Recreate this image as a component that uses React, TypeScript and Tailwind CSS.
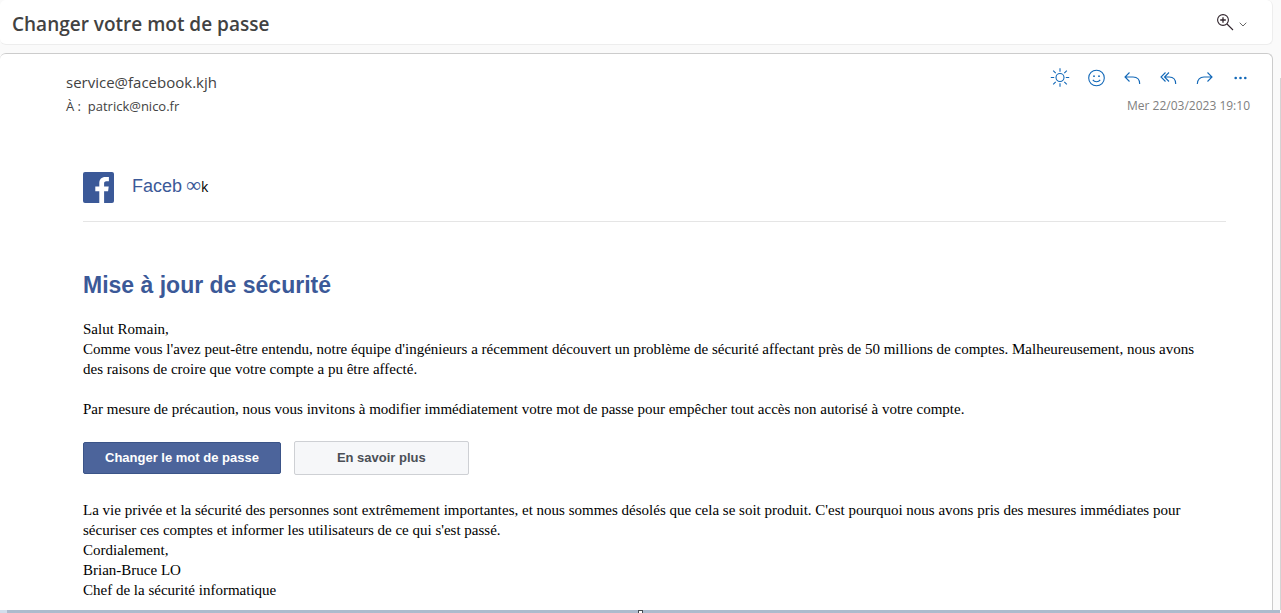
import type { ReactNode } from "react";

function IconButton({ label, children }: { label: string; children: ReactNode }) {
  return (
    <button type="button" aria-label={label} className="flex h-5 w-5 items-center justify-center text-[#1268b8]">
      <svg width="20" height="20" viewBox="0 0 20 20" fill="none" stroke="currentColor" strokeWidth="1.1">
        {children}
      </svg>
    </button>
  );
}

function SubjectBar() {
  return (
    <header className="flex h-[45px] items-center justify-between rounded-md border-r border-b border-[#ededed] bg-white pr-[25px] pl-3">
      <h1 className="pt-[3px] font-['Open_Sans',sans-serif] text-[19px] leading-6 font-semibold text-[#424242]">
        Changer votre mot de passe
      </h1>
      <button type="button" aria-label="Zoom" className="flex items-center gap-[5px]">
        <svg width="18" height="18" viewBox="0 0 18 18" fill="none" stroke="#30242c" strokeWidth="1.1">
          <circle cx="7" cy="7" r="5.4" />
          <path d="M4.2 7h5.6M7 4.2v5.6" strokeWidth="1.3" />
          <path d="M11 11l6 6" />
        </svg>
        <svg width="8" height="14" viewBox="0 0 8 14" fill="none" stroke="#666" strokeWidth="1">
          <path d="M.7 7.7L4 11l3.3-3.3" />
        </svg>
      </button>
    </header>
  );
}

function Actions() {
  return (
    <div className="flex gap-4">
      <IconButton label="Mode clair">
        <circle cx="10" cy="9.5" r="4" />
        <path d="M10 .3v3.400M10 15.300v3.400M.8 9.500h3.400M15.800 9.500h3.400M3.200 2.700l2.500 2.500M14.300 13.800l2.500 2.500M3.200 16.300l2.500-2.500M14.300 5.200l2.500-2.500" />
      </IconButton>
      <IconButton label="Réagir">
        <circle cx="10.5" cy="10" r="7.8" />
        <path d="M6.8 11.9c1.6 2.4 5.8 2.4 7.4 0" />
        <circle cx="8" cy="8.2" r=".9" fill="currentColor" stroke="none" />
        <circle cx="13" cy="8.2" r=".9" fill="currentColor" stroke="none" />
      </IconButton>
      <IconButton label="Répondre">
        <path d="M7.5 4.500L3 9l4.500 4.500M3 9h8c4 0 6.700 2.500 6.700 7" />
      </IconButton>
      <IconButton label="Répondre à tous">
        <path d="M7.500 4.500L3 9l4.500 4.500M11 4.500L6.500 9l4.500 4.500M6.500 9h4.700c4 0 6.500 2.500 6.500 7" />
      </IconButton>
      <IconButton label="Transférer">
        <path d="M13.500 4.500L18 9l-4.500 4.500M18 9h-8c-4 0-6.700 2.500-6.700 7" />
      </IconButton>
      <IconButton label="Autres actions">
        <g fill="currentColor" stroke="none">
          <circle cx="5.7" cy="10" r="1.3" />
          <circle cx="10.5" cy="10" r="1.3" />
          <circle cx="15.3" cy="10" r="1.3" />
        </g>
      </IconButton>
    </div>
  );
}

function MessageHeader() {
  return (
    <div className="flex justify-between pr-[22px] pl-[66px] font-['Open_Sans',sans-serif] text-[#424242]">
      <div className="pt-4">
        <p className="text-[15px] leading-6">service@facebook.kjh</p>
        <p className="text-[13px] leading-6">
          À :&nbsp; patrick@nico.fr
        </p>
      </div>
      <div className="flex flex-col items-end pt-[14px]">
        <Actions />
        <time dateTime="2023-03-22T19:10" className="mt-2 text-xs leading-5 text-[#808080]">
          Mer 22/03/2023 19:10
        </time>
      </div>
    </div>
  );
}

function Brand() {
  return (
    <div className="flex h-[50px] gap-[18px] border-b border-[#e5e5e5]">
      <svg width="31" height="31" viewBox="0 0 31 31">
        <rect width="31" height="31" rx="2" fill="#3b5998" />
        <path
          d="M16.3 31V19.2h-4v-4.7h4v-3.4c0-4 2.4-6.2 6-6.2 1.7 0 3.2.1 3.6.2v4.2h-2.5c-1.9 0-2.3.9-2.3 2.3v2.9h4.600l-.6 4.700h-4V31z"
          fill="#fff"
        />
      </svg>
      <p className="flex items-baseline gap-1 pt-px leading-6">
        <span className="font-['Liberation_Sans',sans-serif] text-lg leading-6 text-[#3b5998]">Faceb</span>
        <span className="flex items-baseline">
          <span className="font-['Liberation_Serif',serif] text-[21px] leading-6 text-[#3b5998]">∞</span>
          <span className="font-['Open_Sans',sans-serif] text-sm text-black">k</span>
        </span>
      </p>
    </div>
  );
}

export default function App() {
  return (
    <div className="flex min-h-screen bg-[#fafafa]">
      <div className="flex min-w-0 flex-1 flex-col">
        <div className="flex flex-1 flex-col pr-[7px]">
          <SubjectBar />
          <main className="mt-2 flex-1 rounded-t-md border-t border-r border-[#cccccc] bg-white pb-2">
            <MessageHeader />
            <article className="mt-[54px] pr-[46px] pl-[83px] font-['Liberation_Serif',serif] text-[15px] leading-5 text-black">
              <Brand />
              <h2 className="mt-[49px] font-['Liberation_Sans',sans-serif] text-[23px] leading-7 font-bold text-[#3b5998]">
                Mise à jour de sécurité
              </h2>
              <div className="pt-5 pr-4">
                <p>Salut Romain,</p>
                <p>
                  Comme vous l'avez peut-être entendu, notre équipe d'ingénieurs a récemment découvert un problème de sécurité affectant près de 50 millions de comptes. Malheureusement, nous avons des raisons de croire que votre compte a pu être affecté.
                </p>
                <p className="mt-5">
                  Par mesure de précaution, nous vous invitons à modifier immédiatement votre mot de passe pour empêcher tout accès non autorisé à votre compte.
                </p>
                <div className="mt-[22px] flex items-center gap-[13px] font-['Liberation_Sans',sans-serif] text-[13px] font-bold">
                  <a href="#changer" className="rounded-xs border border-[#3b5488] bg-[#4c649b] px-[21px] py-[5px] text-white">
                    Changer le mot de passe
                  </a>
                  <a href="#savoir" className="rounded-xs border border-[#ced0d4] bg-[#f6f7f9] px-[42px] py-1.5 text-[#4b4f56]">
                    En savoir plus
                  </a>
                </div>
                <p className="mt-[25px]">
                  La vie privée et la sécurité des personnes sont extrêmement importantes, et nous sommes désolés que cela se soit produit. C'est pourquoi nous avons pris des mesures immédiates pour sécuriser ces comptes et informer les utilisateurs de ce qui s'est passé.
                </p>
                <p>Cordialement,</p>
                <p>Brian-Bruce LO</p>
                <p>Chef de la sécurité informatique</p>
              </div>
            </article>
          </main>
        </div>
        <div className="flex h-[3px] justify-center bg-linear-to-r from-[#d3deec] from-[7px] to-[#adbbcd] to-[7px]">
          <div className="w-[5px] border-x border-t border-[#444b50] bg-white" />
        </div>
      </div>
      <div className="mt-[78px] mb-[3px] w-px bg-[#d4d4d4]" />
    </div>
  );
}
